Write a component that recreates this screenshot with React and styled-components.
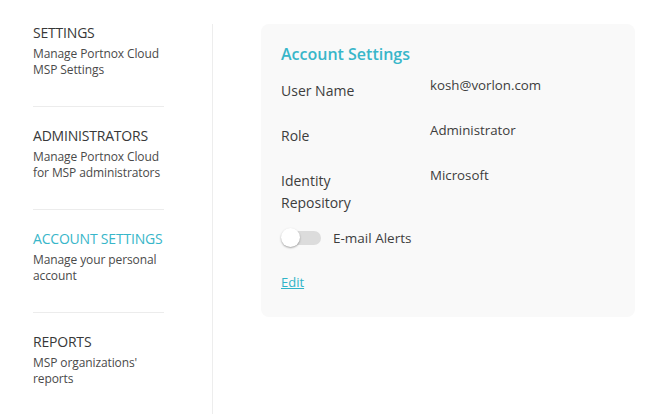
import React from 'react';
import styled, { createGlobalStyle } from 'styled-components';

const GlobalStyle = createGlobalStyle`
  body {
    margin: 0;
    background: #fff;
    font-family: "Open Sans", "Noto Sans", sans-serif;
  }
`;

const Page = styled.div`
  display: flex;
  width: 652px;
  height: 414px;
  overflow: hidden;
`;

const Sidebar = styled.div`
  width: 213px;
  margin-top: 24px;
  padding-left: 33px;
  box-sizing: border-box;
  border-right: 1px solid #ededed;
  flex-shrink: 0;
`;

const NavItem = styled.div`
  width: 131px;
  padding-bottom: 28px;
  margin-bottom: 20px;
  border-bottom: ${p => (p.last ? 'none' : '1px solid #ececec')};
`;

const NavTitle = styled.div`
  font-size: 14px;
  line-height: 18px;
  white-space: nowrap;
  letter-spacing: -0.2px;
  color: ${p => (p.active ? '#38b6c9' : '#383838')};
  margin-bottom: 4px;
`;

const NavDesc = styled.div`
  font-size: 12px;
  line-height: 16px;
  color: #4a4a4a;
  letter-spacing: -0.1px;
`;

const Main = styled.div`
  flex: 1;
  padding: 24px 17px 0 48px;
`;

const Card = styled.div`
  background: #f9f9f9;
  border-radius: 8px;
  padding: 18px 20px 25px;
  width: 374px;
  box-sizing: border-box;
`;

const Heading = styled.h2`
  margin: 0 0 7px;
  font-size: 16px;
  font-weight: 600;
  color: #38b6c9;
  line-height: 24px;
`;

const Row = styled.div`
  display: grid;
  grid-template-columns: 149px 1fr;
  min-height: ${p => p.h || 45}px;
`;

const Label = styled.div`
  font-size: 14px;
  line-height: 22px;
  color: #3d3d3d;
  padding-top: 7px;
`;

const Value = styled.div`
  font-size: 13.3px;
  line-height: 20px;
  color: #3d3d3d;
  padding-top: 2px;
`;

const ToggleRow = styled.div`
  display: flex;
  align-items: center;
  gap: 12px;
  height: 24px;
`;

const Track = styled.div`
  position: relative;
  width: 38px;
  height: 14px;
  border-radius: 7px;
  background: #dcdcdc;
  margin-left: 2px;
`;

const Knob = styled.div`
  position: absolute;
  left: -2px;
  top: -3px;
  width: 19px;
  height: 19px;
  border-radius: 50%;
  background: #fff;
  box-shadow: 0 1px 2px rgba(0, 0, 0, 0.35);
`;

const ToggleText = styled.span`
  font-size: 13.5px;
  color: #3d3d3d;
`;

const EditLink = styled.a`
  display: inline-block;
  margin-top: 23px;
  font-size: 13px;
  color: #2fb4c8;
  text-decoration: underline;
  cursor: pointer;
`;

const navItems = [
  { title: 'SETTINGS', desc: ['Manage Portnox Cloud', 'MSP Settings'] },
  { title: 'ADMINISTRATORS', desc: ['Manage Portnox Cloud', 'for MSP administrators'] },
  { title: 'ACCOUNT SETTINGS', desc: ['Manage your personal', 'account'], active: true },
  { title: 'REPORTS', desc: ["MSP organizations'", 'reports'], last: true },
];

const App = () => (
  <Page>
    <GlobalStyle />
    <Sidebar>
      {navItems.map(item => (
        <NavItem key={item.title} last={item.last}>
          <NavTitle active={item.active}>{item.title}</NavTitle>
          <NavDesc>
            {item.desc[0]}
            <br />
            {item.desc[1]}
          </NavDesc>
        </NavItem>
      ))}
    </Sidebar>
    <Main>
      <Card>
        <Heading>Account Settings</Heading>
        <Row>
          <Label>User Name</Label>
          <Value>kosh@vorlon.com</Value>
        </Row>
        <Row>
          <Label>Role</Label>
          <Value>Administrator</Value>
        </Row>
        <Row h={63}>
          <Label>
            Identity
            <br />
            Repository
          </Label>
          <Value>Microsoft</Value>
        </Row>
        <ToggleRow>
          <Track>
            <Knob />
          </Track>
          <ToggleText>E-mail Alerts</ToggleText>
        </ToggleRow>
        <EditLink>Edit</EditLink>
      </Card>
    </Main>
  </Page>
);

export default App;
